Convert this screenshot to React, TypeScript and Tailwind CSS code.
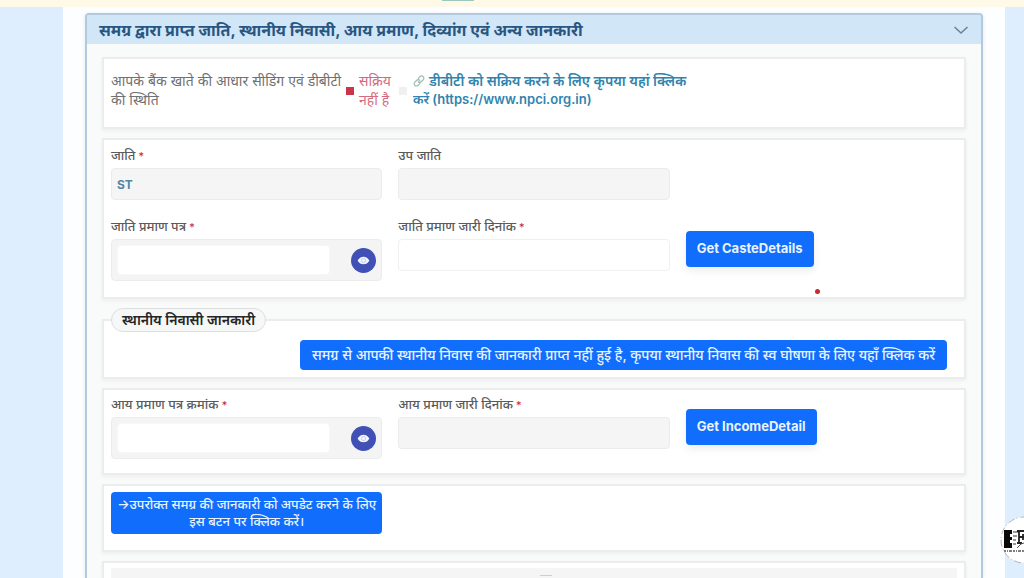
import { useState } from "react";

interface FieldProps {
  id: string;
  label: string;
  required?: boolean;
  value?: string;
  readOnly?: boolean;
}

function FieldLabel({ id, label, required }: { id: string; label: string; required?: boolean }) {
  return (
    <label htmlFor={id} className="block text-[13px] leading-4 font-medium text-[#5a5a5a]">
      {label}
      {required && <span className="text-[11px] leading-none font-normal text-[#c8232c]"> *</span>}
    </label>
  );
}

function Field({ id, label, required, value = "", readOnly }: FieldProps) {
  return (
    <div className="min-w-0">
      <FieldLabel id={id} label={label} required={required} />
      <input
        id={id}
        type="text"
        defaultValue={value}
        readOnly={readOnly}
        className={
          readOnly
            ? "mt-[5px] block h-8 w-full rounded-sm border border-[#ebebeb] bg-[#f5f5f5] px-[5px] text-xs font-bold text-[#5088a6]"
            : "mt-[5px] block h-8 w-full rounded-sm border border-[#f0f0f0] bg-white px-[5px] text-xs font-bold text-[#5088a6]"
        }
      />
    </div>
  );
}

function MaskedField({ id, label, required }: FieldProps) {
  const [visible, setVisible] = useState(false);

  return (
    <div className="min-w-0">
      <FieldLabel id={id} label={label} required={required} />
      <div className="mt-[5px] flex h-[42px] items-center justify-between rounded-sm border border-[#ececec] bg-[#f4f4f4] px-[5px]">
        <input
          id={id}
          type={visible ? "text" : "password"}
          className="h-[30px] w-[82%] rounded-sm border border-[#f7f7f7] bg-white px-1.5 text-xs"
        />
        <button
          type="button"
          aria-label="देखें"
          onClick={() => setVisible(!visible)}
          className="flex size-[25px] shrink-0 items-center justify-center rounded-full bg-[#4150b4]"
        >
          <svg viewBox="0 0 14 10" className="h-[9px] w-[13px]">
            <path d="M.5 5C2 2.2 4.300 .7 7 .7S12 2.200 13.500 5C12 7.800 9.700 9.300 7 9.300S2 7.800 .5 5Z" fill="#f2f6ff" />
            <circle cx="7" cy="5" r="2.300" fill="none" stroke="#b9c6ec" strokeWidth="1" />
          </svg>
        </button>
      </div>
    </div>
  );
}

function FetchButton({ children }: { children: React.ReactNode }) {
  return (
    <button
      type="button"
      className="mt-[13px] h-9 justify-self-start rounded-sm bg-[#116dfb] px-[11px] text-[13px] font-bold text-[#e8f3ff] shadow-[0_4px_8px_rgba(0,0,0,0.07)]"
    >
      {children}
    </button>
  );
}

function Card({ children }: { children: React.ReactNode }) {
  return (
    <section className="border-2 border-[#ececec] bg-white px-[7px] shadow-[0_2px_4px_rgba(0,0,0,0.05)]">
      {children}
    </section>
  );
}

function SealLogo() {
  return (
    <svg viewBox="0 0 24 48" className="absolute right-0 bottom-[14px] h-12 w-6" aria-hidden="true">
      <circle cx="24" cy="24" r="23" fill="#fff" stroke="#b5b5b5" strokeWidth="1" strokeDasharray="7 2 1 3" />
      <path d="M4 14h8v4h-2v3h2v3h-2v3h2v5H4Z" fill="#090909" />
      <path d="M13 16h5M13 20h4M13 24h3M13 28h3" stroke="#777" strokeWidth="1.500" />
      <path d="M17 15h7M19 15v12M17 27h5M19 21h5M23 18v6" stroke="#222" strokeWidth="1.800" fill="none" />
      <path d="M17 32l4-4 3-1" stroke="#555" strokeWidth="1" fill="none" />
      <path d="M4 35h20" stroke="#555" strokeWidth="1.500" strokeDasharray="2 1 1 1 3 1" />
    </svg>
  );
}

export default function App() {
  const [open, setOpen] = useState(true);

  return (
    <div className="relative flex h-screen flex-col overflow-hidden bg-[#dfeeff] font-['Inter','Noto_Sans',sans-serif]">
      <header className="flex h-[7px] shrink-0 justify-center bg-[#fff9e8] pr-[108px]">
        <div className="h-px w-8 bg-[#9bc8b8]" />
      </header>

      <main className="mr-[19px] ml-[63px] min-h-0 flex-1 bg-[#fdfeff] px-[22px] pt-1.5">
        <div className="h-full overflow-hidden rounded-t border-2 border-b-0 border-[#b4c8de] bg-[#f9fafa] shadow-[0_1px_4px_rgba(0,0,0,0.1)]">
          <h1>
            <button
              type="button"
              aria-expanded={open}
              onClick={() => setOpen(!open)}
              className="flex h-[29px] w-full items-center justify-between bg-[#d1e6f7] px-3 text-left text-base leading-5 font-bold text-[#295681]"
            >
              समग्र द्वारा प्राप्त जाति, स्थानीय निवासी, आय प्रमाण, दिव्यांग एवं अन्य जानकारी
              <svg viewBox="0 0 16 16" className="size-4" fill="none" stroke="#6e8294" strokeWidth="1.600">
                <path d="m1.500 5 6.500 6 6.500-6" />
              </svg>
            </button>
          </h1>

          {open && (
            <div className="flex flex-col gap-[9px] px-[15px] pt-[13px]">
              <Card>
                <div className="flex h-[68px] items-start pt-3 text-sm leading-[19px]">
                  <p className="w-[235px] shrink-0 text-[#707070]">आपके बैंक खाते की आधार सीडिंग एवं डीबीटी की स्थिति</p>
                  <span className="mt-4 size-2 shrink-0 bg-[#c93549]" />
                  <span className="ml-[5px] w-10 shrink-0 text-[#d46b7d]">सक्रिय नहीं है</span>
                  <span className="mt-4 size-2 shrink-0 bg-[#eff0ef]" />
                  <a href="https://www.npci.org.in" className="ml-1.5 font-semibold text-[#3084ae]">
                    <span className="block">
                      <svg
                        viewBox="0 0 16 16"
                        className="mr-1 inline size-3 align-[-1px]"
                        fill="none"
                        stroke="#9bb9ad"
                        strokeWidth="1.600"
                        strokeLinecap="round"
                      >
                        <path d="m7 4.500 2.300-2.300a3 3 0 0 1 4.300 4.300L11 9a3 3 0 0 1-4 0M9 11.500l-2.300 2.300a3 3 0 0 1-4.300-4.300L5 7a3 3 0 0 1 4 0" />
                      </svg>
                      डीबीटी को सक्रिय करने के लिए कृपया यहां क्लिक
                    </span>
                    <span className="block text-[13px]">करें (https://www.npci.org.in)</span>
                  </a>
                </div>
              </Card>

              <Card>
                <div className="grid grid-cols-3 gap-x-4 gap-y-[18px] pt-[7px] pb-4">
                  <Field id="caste" label="जाति" required value="ST" readOnly />
                  <Field id="sub-caste" label="उप जाति" readOnly />
                  <div />
                  <MaskedField id="caste-cert" label="जाति प्रमाण पत्र" required />
                  <Field id="caste-date" label="जाति प्रमाण जारी दिनांक" required />
                  <FetchButton>Get CasteDetails</FetchButton>
                </div>
              </Card>

              <fieldset className="min-w-0 border-2 border-[#ececec] bg-white px-[7px] pb-[7px] shadow-[0_2px_4px_rgba(0,0,0,0.05)]">
                <legend className="flex h-6 items-center rounded-full border border-[#dedede] bg-[#f6f7f7] px-[10px] text-sm font-semibold text-[#252525]">
                  स्थानीय निवासी जानकारी
                </legend>
                <div className="flex justify-end pt-2 pr-[10px]">
                  <button
                    type="button"
                    className="h-[30px] rounded bg-[#116dfb] px-3 text-sm font-medium whitespace-nowrap text-[#e8f3ff]"
                  >
                    समग्र से आपकी स्थानीय निवास की जानकारी प्राप्त नहीं हुई है, कृपया स्थानीय निवास की स्व घोषणा के लिए यहाँ क्लिक करें
                  </button>
                </div>
              </fieldset>

              <Card>
                <div className="grid grid-cols-3 gap-x-4 pt-1.5 pb-[14px]">
                  <MaskedField id="income-cert" label="आय प्रमाण पत्र क्रमांक" required />
                  <Field id="income-date" label="आय प्रमाण जारी दिनांक" required readOnly />
                  <FetchButton>Get IncomeDetail</FetchButton>
                </div>
              </Card>

              <Card>
                <div className="grid grid-cols-3 gap-x-4 pt-1.5 pb-4">
                  <button
                    type="button"
                    className="h-[42px] rounded-sm bg-[#116dfb] px-1 text-[13px] leading-[17px] font-medium text-[#e8f3ff]"
                  >
                    →उपरोक्त समग्र की जानकारी को अपडेट करने के लिए इस बटन पर क्लिक करें।
                  </button>
                </div>
              </Card>

              <Card>
                <div className="pt-[5px]">
                  <div className="flex h-8 justify-center bg-[#f5f5f5] pt-[7px] pl-6">
                    <div className="h-px w-3 bg-[#c4d0dd]" />
                  </div>
                </div>
              </Card>
            </div>
          )}
        </div>
      </main>

      <span className="absolute top-[289px] left-[815px] size-[5px] rounded-full bg-[#cb2832]" />
      <SealLogo />
    </div>
  );
}
